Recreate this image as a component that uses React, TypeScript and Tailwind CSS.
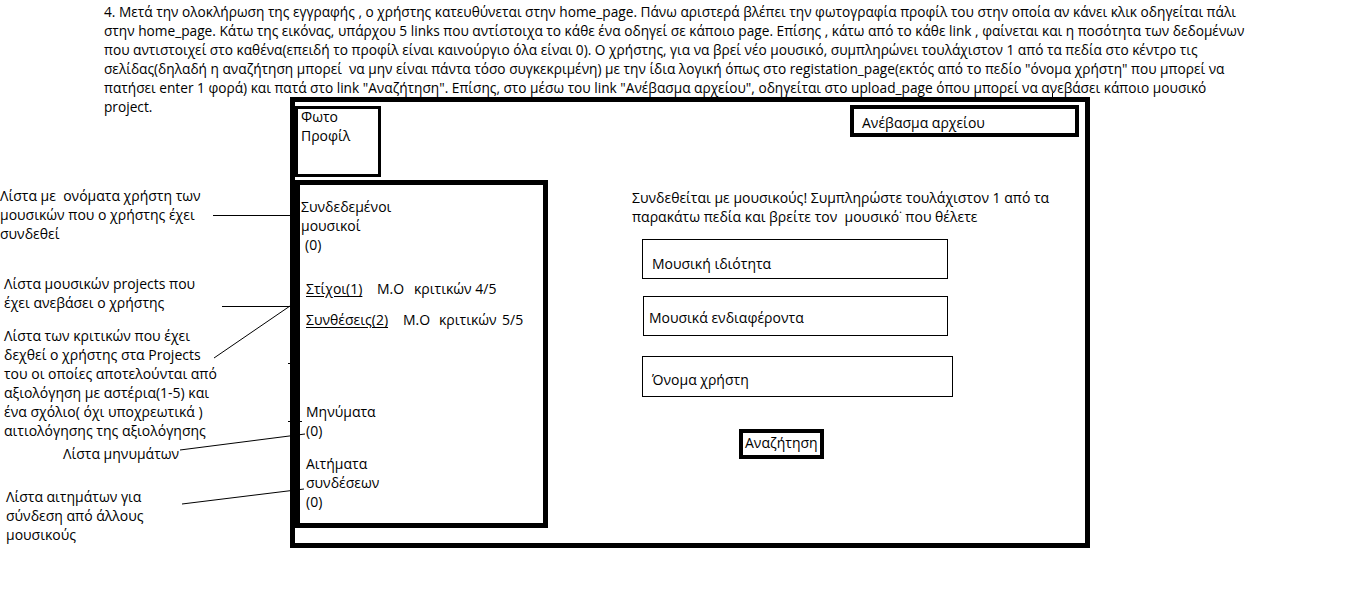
const intro = [
  "4. Μετά την ολοκλήρωση της εγγραφής , ο χρήστης κατευθύνεται στην home_page. Πάνω αριστερά βλέπει την φωτογραφία προφίλ του στην οποία αν κάνει κλικ οδηγείται πάλι",
  "στην home_page. Κάτω της εικόνας, υπάρχου 5 links που αντίστοιχα το κάθε ένα οδηγεί σε κάποιο page. Επίσης , κάτω από το κάθε link , φαίνεται και η ποσότητα των δεδομένων",
  "που αντιστοιχεί στο καθένα(επειδή το προφίλ είναι καινούργιο όλα είναι 0). Ο χρήστης, για να βρεί νέο μουσικό, συμπληρώνει τουλάχιστον 1 από τα πεδία στο κέντρο τις",
  "σελίδας(δηλαδή η αναζήτηση μπορεί  να μην είναι πάντα τόσο συγκεκριμένη) με την ίδια λογική όπως στο registation_page(εκτός από το πεδίο \"όνομα χρήστη\" που μπορεί να",
  "πατήσει enter 1 φορά) και πατά στο link \"Αναζήτηση\". Επίσης, στο μέσω του link \"Ανέβασμα αρχείου\", οδηγείται στο upload_page όπου μπορεί να ανεβάσει κάποιο μουσικό",
];

const Lines = ({ lines }: { lines: string[] }) => (
  <>
    {lines.map((l, i) => (
      <div key={i} className="whitespace-pre">{l}</div>
    ))}
  </>
);

// connector lines from the notes on the left to the wireframe
const Connectors = () => (
  <svg className="absolute inset-0 pointer-events-none" width={1360} height={597}>
    <g stroke="#000" strokeWidth={1} shapeRendering="crispEdges">
      <line x1={213} y1={215.5} x2={292} y2={215.5} />
      <line x1={222} y1={306.5} x2={300} y2={306.5} />
      <line x1={288} y1={363.5} x2={298} y2={363.5} />
      <line x1={288} y1={421.5} x2={302} y2={421.5} />
      <line x1={1052.5} y1={93} x2={1052.5} y2={98} />
    </g>
    <g stroke="#000" strokeWidth={1}>
      <line x1={214} y1={358} x2={290} y2={306} />
      <line x1={180} y1={450} x2={305} y2={434} />
      <line x1={182} y1={504} x2={304} y2={489} />
    </g>
  </svg>
);

const Field = ({ label, className }: { label: string; className: string }) => (
  <div className={`border border-black ${className}`}>{label}</div>
);

export default function App() {
  return (
    <div className="relative w-[1360px] h-[597px] bg-white text-black text-[14px] leading-[19px] font-['Open_Sans','Noto_Sans',sans-serif] overflow-hidden">
      <div className="pl-[104px] pt-[2px] text-[13.7px]">
        <Lines lines={intro} />
      </div>

      <div className="flex">
        {/* notes */}
        <div className="w-[290px] flex flex-col">
          <div className="pl-[104px] text-[13.7px]">project.</div>
          <div className="mt-[70px]">
            <Lines lines={["Λίστα με  ονόματα χρήστη των", "μουσικών που ο χρήστης έχει", "συνδεθεί"]} />
          </div>
          <div className="mt-[31px] pl-[4px]">
            <Lines lines={["Λίστα μουσικών projects που", "έχει ανεβάσει ο χρήστης"]} />
          </div>
          <div className="mt-[14px] pl-[4px]">
            <Lines
              lines={[
                "Λίστα των κριτικών που έχει",
                "δεχθεί ο χρήστης στα Projects",
                "του οι οποίες αποτελούνται από",
                "αξιολόγηση με αστέρια(1-5) και",
                "ένα σχόλιο( όχι υποχρεωτικά )",
                "αιτιολόγησης της αξιολόγησης",
              ]}
            />
          </div>
          <div className="mt-[4px] pl-[63px]">Λίστα μηνυμάτων</div>
          <div className="mt-[24px] pl-[6px]">
            <Lines lines={["Λίστα αιτημάτων για", "σύνδεση από άλλους", "μουσικούς"]} />
          </div>
        </div>

        {/* wireframe */}
        <div className="w-[800px] h-[451px] border-[5px] border-black flex">
          <div className="w-[253px] flex flex-col">
            <div className="mt-[4px] w-[86px] h-[71px] border-[3px] border-black pl-[3px]">
              <div className="-mt-[2px]">
                <Lines lines={["Φωτο", "Προφίλ"]} />
              </div>
            </div>
            <div className="mt-[3px] h-[348px] border-[5px] border-black flex flex-col">
              <div className="mt-[12px] pl-[1px]">
                <div>Συνδεδεμένοι</div>
                <div>μουσικοί</div>
                <div className="pl-[4px]">(0)</div>
              </div>
              <div className="mt-[25px] pl-[6px] flex whitespace-nowrap">
                <span className="w-[71px]"><span className="underline underline-offset-2">Στίχοι(1)</span></span>
                <span className="w-[37px]">Μ.Ο</span>
                <span>κριτικών 4/5</span>
              </div>
              <div className="mt-[12px] pl-[6px] flex whitespace-nowrap">
                <span className="w-[97px]"><span className="underline underline-offset-2">Συνθέσεις(2)</span></span>
                <span className="w-[36px]">Μ.Ο</span>
                <span className="w-[63px]">κριτικών</span>
                <span>5/5</span>
              </div>
              <div className="mt-[73px] pl-[6px]">
                <Lines lines={["Μηνύματα", "(0)"]} />
              </div>
              <div className="mt-[14px] pl-[6px]">
                <Lines lines={["Αιτήματα", "συνδέσεων", "(0)"]} />
              </div>
            </div>
          </div>

          <div className="flex-1 flex flex-col">
            <div className="self-end mt-[3px] mr-[6px] w-[229px] h-[32px] border-[4px] border-black pl-[8px] pt-[4px]">
              Ανέβασμα αρχείου
            </div>
            <div className="mt-[51px] ml-[84px]">
              <Lines
                lines={[
                  "Συνδεθείται με μουσικούς! Συμπληρώστε τουλάχιστον 1 από τα",
                  "παρακάτω πεδία και βρείτε τον  μουσικό˙ που θέλετε",
                ]}
              />
            </div>
            <Field label="Μουσική ιδιότητα" className="mt-[13px] ml-[94px] w-[306px] h-[40px] pl-[9px] pt-[14px]" />
            <Field label="Μουσικά ενδιαφέροντα" className="mt-[17px] ml-[95px] w-[305px] h-[40px] pl-[5px] pt-[11px]" />
            <Field label="Όνομα χρήστη" className="mt-[20px] ml-[94px] w-[311px] h-[41px] pl-[9px] pt-[13px]" />
            <div className="mt-[32px] ml-[191px] w-[85px] h-[30px] border-[4px] border-black pl-[2px]">
              Αναζήτηση
            </div>
          </div>
        </div>
      </div>

      <Connectors />
    </div>
  );
}
